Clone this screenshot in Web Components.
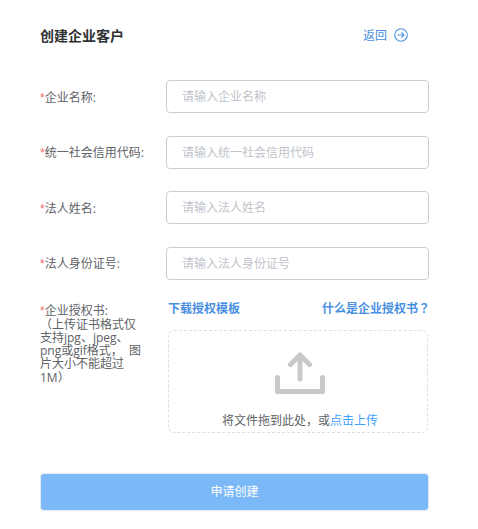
<!DOCTYPE html>
<html>
<head>
<meta charset="utf-8">
<title>创建企业客户</title>
<style>
    html, body{
        margin: 0;
        background: #fff;
    }
    body{
        font-family: "Open Sans", "Noto Sans CJK SC", sans-serif;
        font-size: 12px;
        text-spacing-trim: space-all;
        overflow: hidden;
    }
</style>
</head>
<body>
<create-customer></create-customer>

<script>
class PageHeader extends HTMLElement{
    constructor() {
        super();
        this.attachShadow({mode: 'open'}).innerHTML = `
            <style>
                :host{
                    display: flex;
                    justify-content: space-between;
                    align-items: center;
                    box-sizing: border-box;
                    width: 389px;
                    height: 20px;
                    padding-right: 21px;
                }
                h1{
                    margin: 0;
                    font-size: 14px;
                    font-weight: 700;
                    color: #303133;
                }
                a{
                    display: flex;
                    align-items: center;
                    gap: 7px;
                    color: #4a90e2;
                    font-size: 12px;
                    text-decoration: none;
                }
                svg{
                    display: block;
                    margin-top: -1px;
                }
            </style>
            <h1><slot></slot></h1>
            <a href="#">返回
                <svg width="14" height="14" viewBox="0 0 14 14" fill="none" stroke="#4a90e2" stroke-width="1.1" stroke-linecap="round" stroke-linejoin="round">
                    <circle cx="7" cy="7" r="6.3"/>
                    <path d="M3.8 7h6.2M7.8 4.700L10 7 7.800 9.300"/>
                </svg>
            </a>
        `;
    }
}

class FormRow extends HTMLElement{
    constructor() {
        super();
        this.shadowDOM = this.attachShadow({mode: 'open'});
    }

    connectedCallback() {
        this.shadowDOM.innerHTML = `
            <style>
                :host{
                    display: flex;
                    align-items: center;
                    height: 33px;
                }
                label{
                    width: 126px;
                    flex: none;
                    color: #606266;
                    font-size: 12px;
                }
                i{
                    font-family: "Liberation Sans", sans-serif;
                    font-style: normal;
                    color: #f56c6c;
                }
                input{
                    width: 263px;
                    height: 33px;
                    box-sizing: border-box;
                    padding: 0 15px;
                    border: 1px solid #c8ccd3;
                    border-radius: 4px;
                    outline: none;
                    font: inherit;
                    font-size: 12px;
                }
                input::placeholder{
                    color: #c0c4cc;
                    opacity: 1;
                }
            </style>
            <label><i>*</i>${this.getAttribute('label')}:</label>
            <input type="text" placeholder="${this.getAttribute('placeholder')}">
        `;
    }
}

class UploadBox extends HTMLElement{
    constructor() {
        super();
        this.attachShadow({mode: 'open'}).innerHTML = `
            <style>
                :host{
                    display: flex;
                    width: 390px;
                    height: 132px;
                }
                .hint{
                    width: 106px;
                    margin-right: 22px;
                    padding-top: 2px;
                    flex: none;
                    color: #606266;
                    font-size: 12px;
                    line-height: 13.2px;
                }
                i{
                    font-family: "Liberation Sans", sans-serif;
                    font-style: normal;
                    color: #f56c6c;
                }
                .right{
                    width: 260px;
                }
                .links{
                    display: flex;
                    justify-content: space-between;
                    height: 12px;
                    padding-bottom: 16px;
                    align-items: center;
                }
                .links a{
                    color: #4a90e2;
                    font-size: 12px;
                    font-weight: 700;
                    text-decoration: none;
                }
                .links a:last-child{
                    margin-right: -2px;
                }
                .links span{
                    font-family: "Noto Sans CJK TC", sans-serif;
                }
                .drop{
                    height: 103px;
                    box-sizing: border-box;
                    border: 1px dashed #dcdfe6;
                    border-radius: 6px;
                    display: flex;
                    flex-direction: column;
                    align-items: center;
                    padding: 21px 0 0 4px;
                }
                svg{
                    display: block;
                    margin-bottom: 19px;
                }
                .tip{
                    color: #606266;
                    font-size: 12px;
                    line-height: 16px;
                }
                .tip em{
                    font-style: normal;
                    color: #409eff;
                }
            </style>
            <div class="hint"><i>*</i>企业授权书:<br>（上传证书格式仅支持jpg、jpeg、png或gif格式，&nbsp;&nbsp;图片大小不能超过1M）</div>
            <div class="right">
                <div class="links">
                    <a href="#">下载授权模板</a>
                    <a href="#">什么是企业授权书<span>？</span></a>
                </div>
                <div class="drop">
                    <svg width="50" height="42" viewBox="0 0 50 42" fill="none" stroke="#c9c9c9" stroke-width="5" stroke-linecap="round" stroke-linejoin="round">
                        <path d="M25 27V3.500M15.500 12.500L25 3l9.500 9.500"/>
                        <path d="M2.500 25.500V39.500H47.500V25.500"/>
                    </svg>
                    <div class="tip">将文件拖到此处，或<em>点击上传</em></div>
                </div>
            </div>
        `;
    }
}

class SubmitButton extends HTMLElement{
    constructor() {
        super();
        this.attachShadow({mode: 'open'}).innerHTML = `
            <style>
                :host{
                    display: block;
                    width: 389px;
                }
                button{
                    display: block;
                    width: 100%;
                    height: 38px;
                    padding: 0 0 2px;
                    border: 1px solid #e3ebf5;
                    border-radius: 4px;
                    background: #7ab8f8;
                    color: #fff;
                    font: inherit;
                    font-size: 12px;
                }
            </style>
            <button type="button"><slot></slot></button>
        `;
    }
}

class CreateCustomer extends HTMLElement{
    constructor() {
        super();
        this.attachShadow({mode: 'open'}).innerHTML = `
            <style>
                :host{
                    display: block;
                    padding: 25px 0 0 40px;
                }
                .rows{
                    display: flex;
                    flex-direction: column;
                    gap: 22.5px;
                    margin-top: 35px;
                }
                upload-box{
                    margin-top: 22px;
                }
                submit-button{
                    margin-top: 39px;
                }
            </style>
            <page-header>创建企业客户</page-header>
            <div class="rows">
                <form-row label="企业名称" placeholder="请输入企业名称"></form-row>
                <form-row label="统一社会信用代码" placeholder="请输入统一社会信用代码"></form-row>
                <form-row label="法人姓名" placeholder="请输入法人姓名"></form-row>
                <form-row label="法人身份证号" placeholder="请输入法人身份证号"></form-row>
            </div>
            <upload-box></upload-box>
            <submit-button>申请创建</submit-button>
        `;
    }
}

customElements.define('page-header', PageHeader);
customElements.define('form-row', FormRow);
customElements.define('upload-box', UploadBox);
customElements.define('submit-button', SubmitButton);
customElements.define('create-customer', CreateCustomer);
</script>
</body>
</html>
